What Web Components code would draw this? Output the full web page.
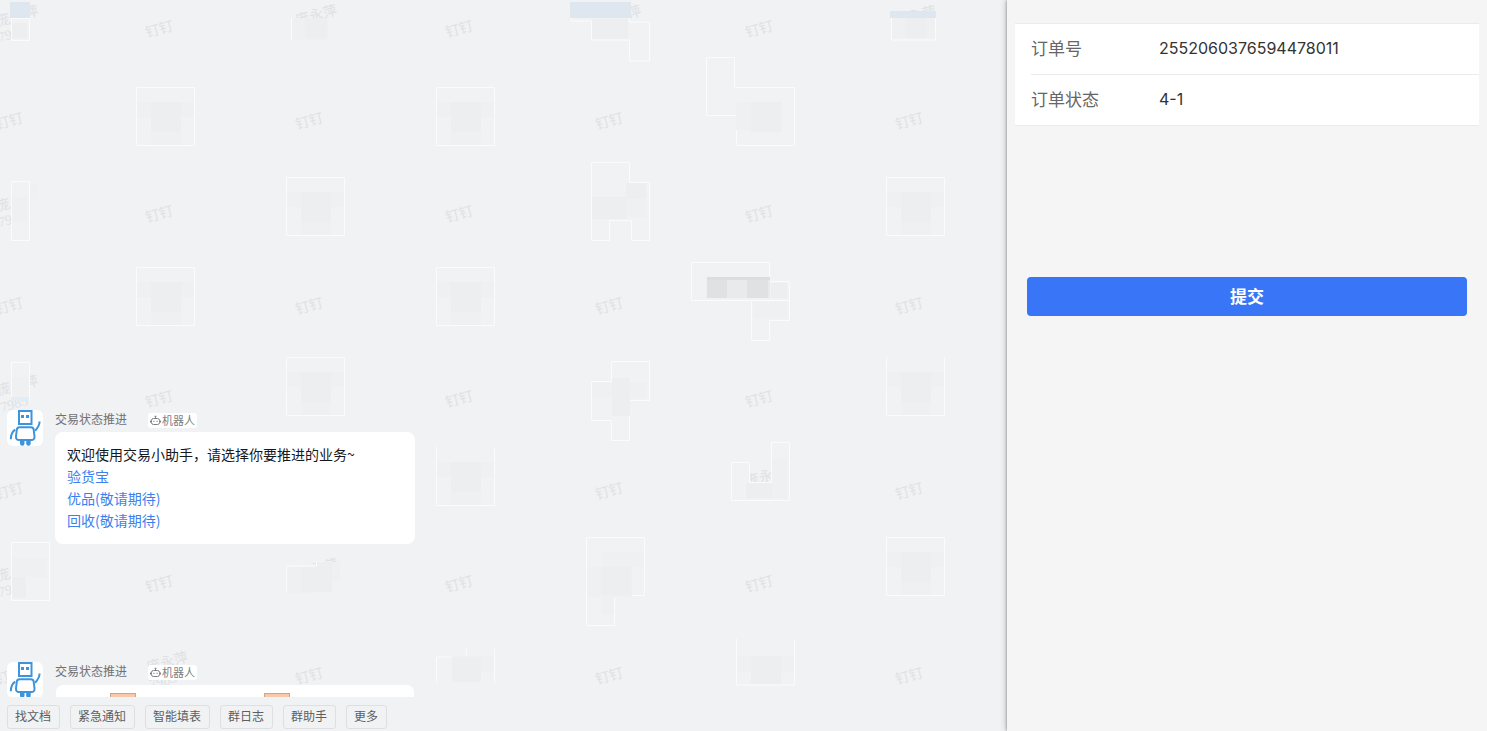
<!DOCTYPE html>
<html lang="zh-CN">
<head>
<meta charset="utf-8">
<title>交易状态推进</title>
<style>
html, body { margin: 0; height: 100%; }
body { font-family: "Noto Sans CJK SC", sans-serif; }
</style>
</head>
<body>
<chat-workspace></chat-workspace>
<script>
const define = (name, html, setup) => customElements.define(name, class extends HTMLElement {
  connectedCallback() {
    if (this.shadowRoot) return;
    const t = document.createElement('template');
    t.innerHTML = html;
    this.attachShadow({ mode: 'open' }).append(t.content.cloneNode(true));
    if (setup) setup(this, this.shadowRoot);
  }
});

// Tiled watermark with mosaic patches, drawn on a free canvas behind the chat
define('chat-watermark', `
<style>
:host { display: block; position: absolute; inset: 0; overflow: hidden; pointer-events: none; }
svg { display: block; width: 100%; height: 100%; }
text { font: 14px "Noto Sans CJK SC", sans-serif; fill: #dfe1e3; }
.num { font-family: "Liberation Serif", serif; }
.base { fill: #f0f2f4; }
.patch { fill: #f0f2f4; stroke: #fafbfc; stroke-width: 1; }
.c1 { fill: #eff0f2; } .c2 { fill: #edeef0; }
.c3 { fill: #e9eaec; } .c4 { fill: #e0e1e3; } .c5 { fill: #dcddde; }
.blue { fill: #dee6f0; } .pale { fill: #e3edf3; }
</style>
<svg aria-hidden="true"><g id="marks"></g><g id="names"></g><g id="patches"></g></svg>`, (host, root) => {
  const rows = [
    [28, [159, 459, 759]], [120, [9, 309, 609, 909]], [213, [159, 459, 759]],
    [305, [9, 309, 609, 909]], [398, [159, 459, 759]], [490, [9, 609, 909]],
    [583, [159, 459, 759]], [675, [9, 309, 609, 909]]
  ];
  const mark = (x, y, s, c = '') =>
    `<text class="${c}" text-anchor="middle" dominant-baseline="central" transform="translate(${x} ${y}) rotate(-15)">${s}</text>`;
  root.getElementById('marks').innerHTML =
    rows.map(([y, xs]) => xs.map(x => mark(x, y, '钉钉')).join('')).join('');
  root.getElementById('names').innerHTML = [
    [3, 19, '庞'], [31, 11, '萍'], [5, 36, '79', 'num'], [316, 14, '庞永萍'],
    [3, 204, '庞'], [5, 221, '79', 'num'], [4, 388, '庞'], [31, 381, '萍'], [14, 404, '7985', 'num'],
    [634, 11, '萍'], [922, 13, '永萍'], [759, 477, '庞永'], [3, 574, '庞'], [5, 591, '79', 'num'],
    [324, 566, '永萍'], [167, 661, '庞永萍'], [163, 681, '7985', 'num']
  ].map(a => mark(...a)).join('');
  const p = d => `<path class="patch" d="${d}"/>`;
  const r = (c, x, y, w, h) => `<rect class="${c}" x="${x}" y="${y}" width="${w}" height="${h}"/>`;
  // Square patch: a bright outline round a darker centre
  const square = (x, y, top = true) =>
    (top ? p(`M${x}.5 ${y}.5h58v58h-58z`) : r('base', x, y, 59, 59) + p(`M${x}.5 ${y}v58.5h58V${y}`)) +
    r('c1', x + 1, y + 15, 57, 15) + r('c1', x + 15, y + 30, 30, 28) + r('c2', x + 15, y + 15, 30, 30);
  root.getElementById('patches').innerHTML =
    square(136, 87) + square(436, 87) + square(286, 177) + square(886, 177) +
    square(136, 267) + square(436, 267) + square(286, 357) + square(886, 357, false) +
    square(436, 447, false) + square(886, 537) +
    p('M11.5 18.5h18v22h-18z') + r('c2', 12, 23, 15, 15) + r('blue', 10, 2, 20, 16) +
    r('c1', 292, 18, 36, 22) + r('c2', 305, 18, 22, 20) + p('M291.5 18v22') +
    p('M571.5 18v3h20v19h38v21h20V22h-20v-4') + r('c2', 592, 19, 36, 20) + r('blue', 570, 2, 61, 16) +
    p('M891.5 18v22h44V18') + r('c1', 892, 18, 43, 20) + r('c2', 905, 18, 22, 20) + r('blue', 890, 11, 46, 7) +
    p('M706.5 57.5h28v30h60v58h-58v-30h-30z') + r('c1', 736, 102, 46, 28) + r('c2', 751, 102, 30, 30) +
    p('M11.5 181.5h18v59h-18z') + r('c1', 12, 197, 15, 25) + r('c1', 31, 183, 6, 16) +
    p('M591.5 162.5h38v20h20v58h-18v-20h-22v20h-18z') + r('c1', 592, 197, 54, 20) + r('c2', 592, 197, 34, 22) + r('c2', 626, 183, 20, 16) +
    p('M691.5 262.5h78v19h20v39h-20v20h-18v-40h-60z') + p('M691 300.5h98') +
    r('c1', 706, 277, 64, 21) + r('c3', 707, 278, 63, 20) +
    r('c4', 707, 277, 20, 21) + r('c4', 747, 277, 21, 21) +
    r('c5', 707, 277, 63, 3) + r('c2', 771, 283, 16, 15) + r('c1', 753, 302, 34, 16) +
    p('M11.5 362.5h18v38h-18z') + r('c1', 12, 377, 16, 22) + r('pale', 11, 397, 18, 4) +
    p('M611.5 361.5h38v39h-20v40h-18v-20h-20v-39h20z') + r('c1', 592, 382, 54, 16) + r('c2', 612, 378, 18, 38) +
    p('M731.5 462.5h18v20h22v-40h18v58h-58z') + r('c2', 746, 483, 26, 15) + r('c1', 772, 458, 15, 40) +
    p('M586.5 537.5h58v58h-30v30h-28z') + r('c1', 587, 567, 45, 30) + r('c1', 602, 552, 42, 15) + r('c2', 601, 567, 30, 28) + r('c1', 601, 596, 13, 18) +
    p('M11.5 542.5h38v58h-38z') + r('c1', 12, 558, 35, 19) + r('c2', 12, 577, 14, 21) +
    p('M286.5 592v-26h30v-4h15v30') + r('base', 287, 567, 50, 27) + r('c1', 287, 567, 30, 26) + r('c2', 301, 567, 16, 25) + r('c2', 317, 562, 15, 30) + r('c1', 332, 562, 8, 20) +
    p('M436.5 683v-26h30v-8h28v34') + r('base', 467, 648, 27, 9) + r('c1', 452, 656, 42, 16) + r('c2', 452, 658, 29, 24) +
    r('base', 736, 639, 59, 46) + p('M736.5 639v46h58v-46') + r('c1', 737, 656, 57, 16) + r('c2', 751, 656, 30, 28);
});

define('robot-avatar', `
<style>
:host { display: block; flex: none; width: 36px; height: 36px; border-radius: 6px; background: #fff; overflow: hidden; }
svg { display: block; }
</style>
<svg width="36" height="36" viewBox="0 0 36 36" fill="none" stroke="#3e94db" stroke-width="2" aria-hidden="true">
<rect x="12" y="1" width="12.5" height="13"/>
<path d="M14 5h3v3h-3zM19 5h3v3h-3z" fill="#3e94db" stroke="none"/>
<path d="M12.5 17.3h11.500q2.300 0 2.700 2.400l.8 6.800q.2 3.600-3.200 3.600H12.200q-3.400 0-3.200-3.600l.8-6.800q.4-2.400 2.700-2.400z"/>
<path d="M32.600 11.600q-.1 4.600-4.500 9.200M8.200 19.700Q3.900 22.600 3.800 29.200" />
<path d="M13 31h4.500v2.500a2 2 0 0 1-4.500 0zM19.200 31h4.500v2.500a2 2 0 0 1-4.500 0z" fill="#3e94db" stroke="none"/>
</svg>`);

define('bot-badge', `
<style>
:host { display: inline-flex; align-items: center; gap: 1px; height: 15px; padding: 0 2px; border-radius: 3px; background: #fff; color: #7c7e80; font-size: 11px; line-height: 14px; }
span { padding-bottom: 1px; }
</style>
<svg width="11" height="11" viewBox="0 0 11 11" fill="none" stroke="#7c7e80" aria-hidden="true">
<path d="M3.500 3.500h4a2 2 0 0 1 2 2v2a2 2 0 0 1-2 2h-4a2 2 0 0 1-2-2v-2a2 2 0 0 1 2-2zM5.500 1.500v2M4.500 1.300h2M.5 5.500v2M10.500 5.500v2"/>
<path d="M3.400 5.700h1v1.200h-1zM6.600 5.700h1v1.200h-1z" fill="#7c7e80" stroke="none"/>
</svg><span><slot></slot></span>`);

define('chat-message', `
<style>
:host { display: flex; gap: 12px; align-items: flex-start; }
header { display: flex; align-items: center; gap: 21px; height: 20px; margin-bottom: 2px; color: #6f7174; font-size: 12px; line-height: 18px; }
header > span { padding-bottom: 2px; }
.body { flex: 0 1 360px; min-width: 0; }
.bubble { padding: 11px 12px 13px; border-radius: 8px; background: #fff; color: #17181a; font-size: 14px; line-height: 22px; }
:host([card]) .bubble { padding: 8px 54px; border: 1px solid transparent; background-clip: padding-box; }
</style>
<robot-avatar></robot-avatar>
<div class="body">
<header><span>交易状态推进</span><bot-badge>机器人</bot-badge></header>
<div class="bubble"><slot></slot></div>
</div>`);

define('business-menu', `
<style>
:host { display: block; }
p, ul { margin: 0; padding: 0; list-style: none; }
a { color: #3c7ff0; text-decoration: none; }
</style>
<p>欢迎使用交易小助手，请选择你要推进的业务~</p>
<ul><li><a href="#check">验货宝</a></li><li><a href="#select">优品(敬请期待)</a></li><li><a href="#recycle">回收(敬请期待)</a></li></ul>`);

define('card-tiles', `
<style>
:host { display: flex; gap: 128px; }
i { flex: none; box-sizing: border-box; width: 26px; height: 26px; border: 1px solid #c6a795; background: #f8c8ab; }
</style><i></i><i></i>`);

define('quick-bar', `
<style>
:host { position: relative; display: flex; flex: none; align-items: center; gap: 10px; height: 34px; box-sizing: border-box; padding: 6px 7px 0; }
button { box-sizing: border-box; flex: none; height: 24px; margin: 0; padding: 0 8px 2px 7px; border: 1px solid #dedfe1; border-radius: 3px; background: #f0f2f4; color: #5c5e61; font: 12px/20px "Noto Sans CJK SC", sans-serif; }
</style>
<button type="button">找文档</button><button type="button">紧急通知</button><button type="button">智能填表</button><button type="button">群日志</button><button type="button">群助手</button><button type="button">更多</button>`);

define('chat-pane', `
<style>
:host { position: relative; display: flex; flex-direction: column; min-width: 0; overflow: hidden; background: #f0f2f4; }
main { position: relative; flex: 1; min-height: 0; overflow: hidden; display: flex; flex-direction: column; gap: 118px; box-sizing: border-box; padding: 410px 7px 0; }
chat-message { flex: none; }
</style>
<chat-watermark></chat-watermark>
<main>
<chat-message><business-menu></business-menu></chat-message>
<chat-message card><card-tiles></card-tiles></chat-message>
</main>
<quick-bar></quick-bar>`);

define('order-field', `
<style>
:host { display: flex; align-items: center; box-sizing: border-box; height: 51px; margin-left: 16px; padding-bottom: 2px; border-bottom: 1px solid #ebebeb; font-size: 17px; line-height: 24px; }
:host(:last-of-type) { height: 50px; border-bottom: 0; }
label { flex: none; width: 128px; color: #666; }
output { color: #333; font-family: Inter, "Noto Sans CJK SC", sans-serif; font-size: 16px; }
</style>
<label for="value"></label><output id="value"><slot></slot></output>`, (host, root) => {
  root.querySelector('label').textContent = host.getAttribute('label');
});

define('order-panel', `
<style>
:host { position: relative; display: block; box-sizing: border-box; padding: 23px 8px; background: #f5f5f5; box-shadow: 0 0 3px rgba(0,0,0,.4), 0 0 8px rgba(0,0,0,.2); }
section { border: solid #ebebeb; border-width: 1px 0; background: #fff; margin-bottom: 151px; }
button { display: block; box-sizing: border-box; width: calc(100% - 24px); height: 39px; margin: 0 12px; padding: 0 0 2px; border: 0; border-radius: 4px; background: #3875f7; color: #fff; font: bold 17px/36px "Noto Sans CJK SC", sans-serif; }
</style>
<section><order-field label="订单号">2552060376594478011</order-field><order-field label="订单状态">4-1</order-field></section>
<button type="button">提交</button>`);

define('chat-workspace', `
<style>
:host { display: grid; grid-template-columns: minmax(0, 1fr) 480px; height: 100vh; overflow: hidden; }
</style>
<chat-pane></chat-pane><order-panel></order-panel>`);
</script>
</body>
</html>
